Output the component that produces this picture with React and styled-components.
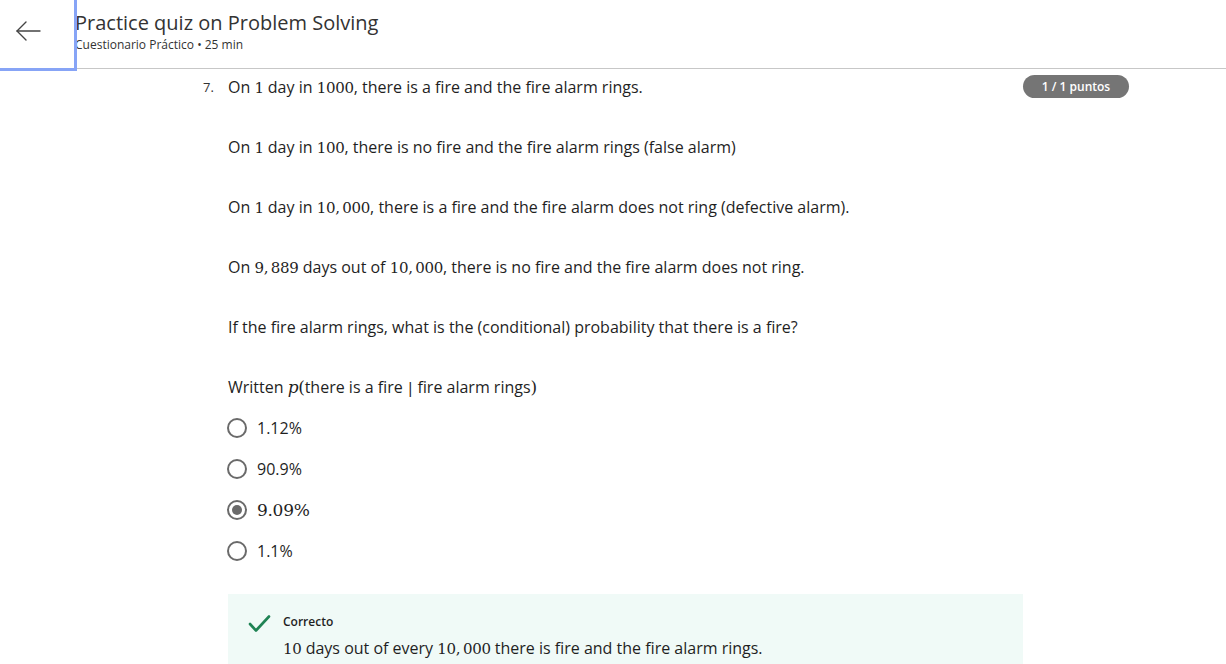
import React from "react";
import styled, { createGlobalStyle } from "styled-components";

const Global = createGlobalStyle`
  html, body { margin: 0; padding: 0; background: #fff; }
  body { font-family: "Open Sans", "Noto Sans", sans-serif; color: #1f1f1f; overflow: hidden; }
  * { box-sizing: border-box; }
`;

const Page = styled.div`
  width: 1226px;
  height: 664px;
  overflow: hidden;
  display: flex;
  flex-direction: column;
`;

const Header = styled.header`
  height: 69px;
  display: flex;
  align-items: stretch;
  border-bottom: 1px solid #c7c7c7;
  flex-shrink: 0;
`;

const BackButton = styled.button`
  width: 77px;
  height: 71px;
  margin-bottom: -2px;
  background: #fff;
  border: none;
  border-right: 3px solid #87a4f6;
  border-bottom: 3px solid #87a4f6;
  display: flex;
  align-items: center;
  justify-content: flex-start;
  padding: 0 0 6px 15px;
  position: relative;
  z-index: 1;
  cursor: pointer;
`;

const TitleBlock = styled.div`
  display: flex;
  flex-direction: column;
  padding-top: 10px;
  margin-left: -2px;
`;

const Title = styled.h1`
  margin: 0;
  font-size: 20px;
  font-weight: 400;
  line-height: 26px;
  color: #333;
`;

const Subtitle = styled.div`
  font-size: 12px;
  line-height: 18px;
  color: #333;
`;

const Body = styled.main`
  display: flex;
  padding-left: 203px;
  padding-top: 6px;
`;

const Number = styled.div`
  width: 25px;
  font-size: 13px;
  line-height: 24px;
  color: #333;
`;

const Content = styled.div`
  width: 795px;
  display: flex;
  flex-direction: column;
`;

const Para = styled.p`
  margin: 0 0 36px 0;
  font-size: 16px;
  line-height: 24px;
  height: 24px;
  color: #1f1f1f;
  &:last-of-type { margin-bottom: 17px; }
`;

const M = styled.span`
  font-family: "DejaVu Serif", "Liberation Serif", serif;
  font-size: ${p => (p.$big ? "17px" : "15px")};
  font-style: ${p => (p.$italic ? "italic" : "normal")};
  letter-spacing: -0.3px;
  line-height: 0;
  margin: ${p => (p.$spaced ? "0 5px" : "0")};
`;

const Options = styled.div`
  display: flex;
  flex-direction: column;
  gap: 17px;
  margin-bottom: 31px;
`;

const Option = styled.label`
  display: flex;
  align-items: center;
  height: 24px;
  font-size: 16px;
  color: #1f1f1f;
`;

const Radio = styled.span`
  width: 20px;
  height: 20px;
  border-radius: 50%;
  border: 2px solid #6a6a6a;
  margin-left: -1px;
  margin-right: 10px;
  display: flex;
  align-items: center;
  justify-content: center;
  &::after {
    content: "";
    width: 10px;
    height: 10px;
    border-radius: 50%;
    background: ${p => (p.$checked ? "#6a6a6a" : "transparent")};
  }
`;

const Feedback = styled.div`
  background: #f0faf7;
  padding: 18px 0 10px 20px;
  display: flex;
  gap: 12px;
  height: 80px;
`;

const FeedbackText = styled.div`
  display: flex;
  flex-direction: column;
`;

const FeedbackLabel = styled.div`
  font-size: 12px;
  font-weight: 600;
  line-height: 20px;
  color: #1f1f1f;
`;

const FeedbackBody = styled.div`
  font-size: 16px;
  line-height: 24px;
  margin-top: 4px;
`;

const Side = styled.div`
  padding-top: 0;
`;

const Badge = styled.div`
  background: #757575;
  color: #fff;
  font-size: 12px;
  font-weight: 600;
  height: 23px;
  width: 106px;
  border-radius: 12px;
  display: flex;
  align-items: center;
  justify-content: center;
`;

export default function App() {
  return (
    <Page>
      <Global />
      <Header>
        <BackButton aria-label="Back">
          <svg width="26" height="22" viewBox="0 0 26 22" fill="none" stroke="#444" strokeWidth="1.4" strokeLinecap="round" strokeLinejoin="round">
            <path d="M25 11H2" />
            <path d="M11 2L2 11l9 9" />
          </svg>
        </BackButton>
        <TitleBlock>
          <Title>Practice quiz on Problem Solving</Title>
          <Subtitle>Cuestionario Práctico • 25 min</Subtitle>
        </TitleBlock>
      </Header>
      <Body>
        <Number>7.</Number>
        <Content>
          <Para>On <M>1</M> day in <M>1000</M>, there is a fire and the fire alarm rings.</Para>
          <Para>On <M>1</M> day in <M>100</M>, there is no fire and the fire alarm rings (false alarm)</Para>
          <Para>On <M>1</M> day in <M>10,&thinsp;000</M>, there is a fire and the fire alarm does not ring (defective alarm).</Para>
          <Para>On <M>9,&thinsp;889</M> days out of <M>10,&thinsp;000</M>, there is no fire and the fire alarm does not ring.</Para>
          <Para>If the fire alarm rings, what is the (conditional) probability that there is a fire?</Para>
          <Para>Written <M $italic $big>p</M><M $big>(</M>there is a fire<M $spaced>|</M>fire alarm rings<M $big>)</M></Para>
          <Options>
            <Option><Radio />1.12%</Option>
            <Option><Radio />90.9%</Option>
            <Option><Radio $checked /><M $big>9.09%</M></Option>
            <Option><Radio />1.1%</Option>
          </Options>
          <Feedback>
            <svg width="23" height="19" viewBox="0 0 23 19" fill="none" stroke="#1f8354" strokeWidth="2.6" strokeLinecap="round" strokeLinejoin="round" style={{ marginTop: 2 }}>
              <path d="M2 10l6 6.5L21 2.5" />
            </svg>
            <FeedbackText>
              <FeedbackLabel>Correcto</FeedbackLabel>
              <FeedbackBody><M>10</M> days out of every <M>10,&thinsp;000</M> there is fire and the fire alarm rings.</FeedbackBody>
            </FeedbackText>
          </Feedback>
        </Content>
        <Side>
          <Badge>1 / 1 puntos</Badge>
        </Side>
      </Body>
    </Page>
  );
}
